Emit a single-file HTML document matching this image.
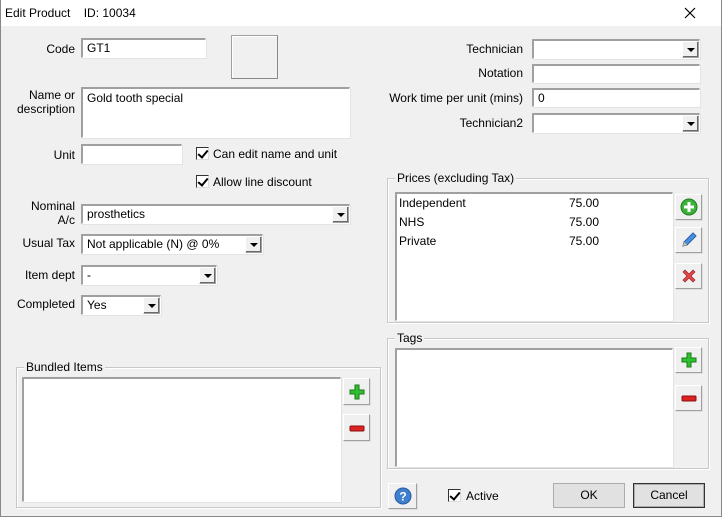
<!DOCTYPE html>
<html><head><meta charset="utf-8"><style>
*{box-sizing:border-box;margin:0;padding:0}
body{width:722px;height:517px;background:#f0f0f0;font-family:"Liberation Sans",sans-serif;font-size:12px;color:#000;position:relative;overflow:hidden}
.a{position:absolute}
.title{left:0;top:0;width:722px;height:26px;background:#fff}
.lbl{position:absolute;text-align:right;white-space:nowrap;line-height:14px}
.in{position:absolute;background:#fff;border-top:2px solid #a0a0a0;border-left:2px solid #a0a0a0;border-bottom:1px solid #fff;border-right:1px solid #fff;box-shadow:1px 1px 0 #e3e3e3;padding:1px 4px;line-height:14px;white-space:nowrap;overflow:hidden}
.dd{position:absolute;right:0;top:0;bottom:0;width:17px;background:#f0f0f0;border:1px solid #a0a0a0;border-top-color:#fff;border-left-color:#fff;box-shadow:inset -1px -1px 0 #696969}
.dd:after{content:"";position:absolute;left:4px;top:6px;border-left:4px solid transparent;border-right:4px solid transparent;border-top:4px solid #000}
.cb{position:absolute;width:13px;height:13px;background:#fff;border:1px solid #333;border-right-color:#ddd;border-bottom-color:#ddd}
.cb:after{content:"";position:absolute;left:3px;top:0px;width:4px;height:8px;border-right:2px solid #000;border-bottom:2px solid #000;transform:rotate(40deg)}
.gb{position:absolute;border:1px solid #c8c8c8;box-shadow:inset 1px 1px 0 #fff,1px 1px 0 #fff}
.gb span{position:absolute;left:7px;top:-8px;background:#f0f0f0;padding:0 2px;line-height:14px}
.btn{position:absolute;background:#f0f0f0;border:1px solid #fff;border-right-color:#a0a0a0;border-bottom-color:#a0a0a0;box-shadow:1px 1px 0 #e0e0e0;display:flex;align-items:center;justify-content:center}
.pb{position:absolute;background:#e1e1e1;border:1px solid #adadad;text-align:center;line-height:23px}
</style></head><body>
<div class="a title"></div>
<div class="a" style="left:0;top:0;width:722px;height:517px;border:1px solid #888;border-top:none"></div>
<div class="a" style="left:5px;top:6px">Edit Product&nbsp;&nbsp;&nbsp;&nbsp;ID: 10034</div>
<svg class="a" style="left:684px;top:7px" width="12" height="12"><path d="M1 1L11 11M11 1L1 11" stroke="#000" stroke-width="1.2"/></svg>

<div class="lbl" style="right:647px;top:42px">Code</div>
<div class="in" style="left:81px;top:38px;width:125px;height:20px">GT1</div>
<div class="a" style="left:231px;top:35px;width:47px;height:44px;border:1px solid #a0a0a0;border-right-color:#888;border-bottom-color:#888;box-shadow:inset 1px 1px 0 #fff"></div>

<div class="lbl" style="right:647px;top:88px">Name or<br>description</div>
<div class="in" style="left:81px;top:87px;width:269px;height:51px;padding-top:2px">Gold tooth special</div>

<div class="lbl" style="right:647px;top:148px">Unit</div>
<div class="in" style="left:81px;top:144px;width:101px;height:20px"></div>
<div class="cb" style="left:196px;top:147px"></div><div class="lbl" style="left:213px;top:147px">Can edit name and unit</div>
<div class="cb" style="left:196px;top:175px"></div><div class="lbl" style="left:213px;top:175px">Allow line discount</div>

<div class="lbl" style="right:647px;top:199px">Nominal<br>A/c</div>
<div class="in" style="left:81px;top:204px;width:269px;height:20px">prosthetics<div class="dd"></div></div>
<div class="lbl" style="right:647px;top:236px">Usual Tax</div>
<div class="in" style="left:81px;top:234px;width:182px;height:20px">Not applicable (N) @ 0%<div class="dd"></div></div>
<div class="lbl" style="right:647px;top:268px">Item dept</div>
<div class="in" style="left:81px;top:265px;width:136px;height:20px">-<div class="dd"></div></div>
<div class="lbl" style="right:647px;top:297px">Completed</div>
<div class="in" style="left:81px;top:295px;width:80px;height:20px">Yes<div class="dd"></div></div>

<div class="gb" style="left:16px;top:367px;width:365px;height:141px"><span>Bundled Items</span></div>
<div class="in" style="left:22px;top:377px;width:319px;height:125px"></div>
<div class="btn" style="left:343px;top:378px;width:27px;height:27px"><svg width="16" height="16"><path d="M6 1h4v5h5v4h-5v5H6v-5H1V6h5z" fill="#2ec02e" stroke="#1a7a1a"/></svg></div>
<div class="btn" style="left:343px;top:414px;width:27px;height:27px"><svg width="16" height="16"><rect x="1" y="6" width="14" height="5" rx="1" fill="#d22" stroke="#8a1010"/></svg></div>

<div class="lbl" style="right:199px;top:42px">Technician</div>
<div class="in" style="left:532px;top:39px;width:168px;height:20px"><div class="dd"></div></div>
<div class="lbl" style="right:199px;top:66px">Notation</div>
<div class="in" style="left:532px;top:64px;width:168px;height:19px"></div>
<div class="lbl" style="right:199px;top:91px">Work time per unit (mins)</div>
<div class="in" style="left:532px;top:88px;width:168px;height:19px">0</div>
<div class="lbl" style="right:199px;top:116px">Technician2</div>
<div class="in" style="left:532px;top:113px;width:168px;height:20px"><div class="dd"></div></div>

<div class="gb" style="left:387px;top:178px;width:322px;height:145px"><span>Prices (excluding Tax)</span></div>
<div class="in" style="left:395px;top:192px;width:278px;height:129px;padding:0 3px"></div>
<div class="a" style="left:399px;top:194px;line-height:19px">Independent<br>NHS<br>Private</div>
<div class="a" style="left:569px;top:194px;line-height:19px">75.00<br>75.00<br>75.00</div>
<div class="btn" style="left:675px;top:194px;width:27px;height:26px"><svg width="18" height="18"><circle cx="9" cy="9" r="8" fill="#3bb33b" stroke="#1d7a1d"/><path d="M7.5 4h3v3.5H14v3h-3.5V14h-3v-3.5H4v-3h3.5z" fill="#fff"/></svg></div>
<div class="btn" style="left:675px;top:227px;width:27px;height:26px"><svg width="18" height="18"><path d="M3 15l1-4L13 2l3 3-9 9z" fill="#4a90e0" stroke="#2a5ea8"/><path d="M3 15l1-4 3 3z" fill="#e8c080"/></svg></div>
<div class="btn" style="left:675px;top:263px;width:27px;height:26px"><svg width="16" height="16"><path d="M2 4l2-2 4 4 4-4 2 2-4 4 4 4-2 2-4-4-4 4-2-2 4-4z" fill="#e04848" stroke="#a02020" stroke-width=".7"/></svg></div>

<div class="gb" style="left:387px;top:338px;width:322px;height:131px"><span>Tags</span></div>
<div class="in" style="left:395px;top:348px;width:278px;height:119px"></div>
<div class="btn" style="left:675px;top:347px;width:27px;height:26px"><svg width="16" height="16"><path d="M6 1h4v5h5v4h-5v5H6v-5H1V6h5z" fill="#2ec02e" stroke="#1a7a1a"/></svg></div>
<div class="btn" style="left:675px;top:385px;width:27px;height:26px"><svg width="16" height="16"><rect x="1" y="6" width="14" height="5" rx="1" fill="#d22" stroke="#8a1010"/></svg></div>

<div class="btn" style="left:388px;top:483px;width:29px;height:26px"><svg width="18" height="18"><circle cx="9" cy="9" r="8" fill="#3f7fd0" stroke="#2a5aa0"/><text x="9" y="13.5" font-family="Liberation Sans" font-weight="bold" font-size="12" fill="#fff" text-anchor="middle">?</text></svg></div>
<div class="cb" style="left:448px;top:489px"></div><div class="lbl" style="left:466px;top:489px">Active</div>
<div class="pb" style="left:553px;top:483px;width:72px;height:25px">OK</div>
<div class="pb" style="left:633px;top:483px;width:72px;height:25px;border:1px solid #333;box-shadow:inset 0 0 0 1px #adadad">Cancel</div>
</body></html>
